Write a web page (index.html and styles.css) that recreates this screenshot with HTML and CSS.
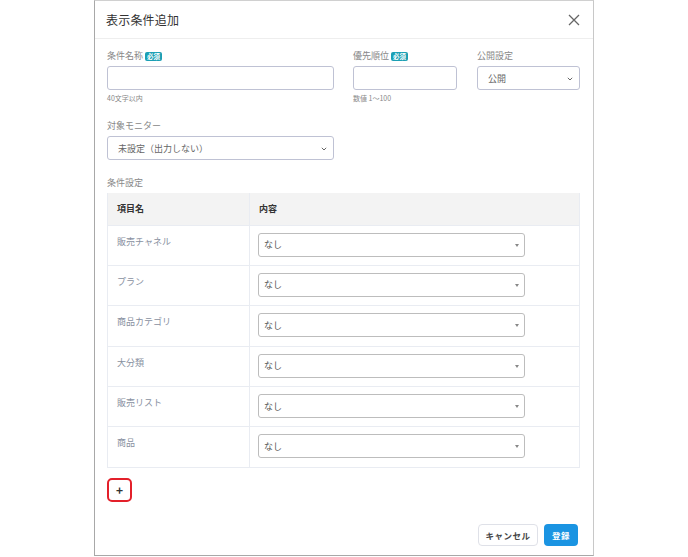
FILE: index.html
```html
<!DOCTYPE html>
<html lang="ja">
<head>
<meta charset="utf-8">
<link rel="stylesheet" href="styles.css">
</head>
<body>
<div class="modal">
  <div class="modal-header">
    <div class="title">表示条件追加</div>
    <svg class="close" width="12" height="12" viewBox="0 0 12 12"><path d="M1 1L11 11M11 1L1 11" stroke="#666" stroke-width="1.3" fill="none"/></svg>
  </div>
  <div class="modal-body">
    <div class="row">
      <div class="field f-name">
        <div class="label">条件名称<span class="badge">必須</span></div>
        <div class="input"></div>
        <div class="help">40文字以内</div>
      </div>
      <div class="field f-prio">
        <div class="label">優先順位<span class="badge">必須</span></div>
        <div class="input"></div>
        <div class="help">数値 1〜100</div>
      </div>
      <div class="field f-pub">
        <div class="label">公開設定</div>
        <div class="input select"><span>公開</span>
          <svg class="chev" width="6" height="4" viewBox="0 0 6 4"><path d="M0.8 0.8L3 3L5.2 0.8" stroke="#666" stroke-width="1" fill="none"/></svg>
        </div>
      </div>
    </div>
    <div class="row row2">
      <div class="field f-name">
        <div class="label">対象モニター</div>
        <div class="input select"><span>未設定（出力しない）</span>
          <svg class="chev" width="6" height="4" viewBox="0 0 6 4"><path d="M0.8 0.8L3 3L5.2 0.8" stroke="#666" stroke-width="1" fill="none"/></svg>
        </div>
      </div>
    </div>
    <div class="label sect">条件設定</div>
    <table class="cond">
      <thead>
        <tr><th class="c1">項目名</th><th>内容</th><th class="c3"></th></tr>
      </thead>
      <tbody>
        <tr><td class="c1">販売チャネル</td><td><div class="tsel">なし<i class="caret"></i></div></td><td class="c3"></td></tr>
        <tr><td class="c1">プラン</td><td><div class="tsel">なし<i class="caret"></i></div></td><td class="c3"></td></tr>
        <tr><td class="c1">商品カテゴリ</td><td><div class="tsel">なし<i class="caret"></i></div></td><td class="c3"></td></tr>
        <tr><td class="c1">大分類</td><td><div class="tsel">なし<i class="caret"></i></div></td><td class="c3"></td></tr>
        <tr><td class="c1">販売リスト</td><td><div class="tsel">なし<i class="caret"></i></div></td><td class="c3"></td></tr>
        <tr><td class="c1">商品</td><td><div class="tsel">なし<i class="caret"></i></div></td><td class="c3"></td></tr>
      </tbody>
    </table>
    <div class="plus">+</div>
  </div>
  <div class="modal-footer">
    <div class="btn cancel">キャンセル</div>
    <div class="btn primary">登録</div>
  </div>
</div>
</body>
</html>
```

FILE: styles.css
```css
* { box-sizing: border-box; }
html, body { margin: 0; padding: 0; background: #fff; }
body {
  font-family: "Noto Sans CJK JP", "Noto Sans", sans-serif;
  color: #333;
}
.modal {
  margin-left: 94px;
  width: 500px;
  height: 556px;
  border: 1px solid #a8a8a8;
  border-top-color: #d0d0d0;
  border-right-color: #c8c8c8;
  background: #fff;
  display: flex;
  flex-direction: column;
}
.modal-header {
  height: 38px;
  border-bottom: 1px solid #eeeeee;
  display: flex;
  align-items: center;
  justify-content: space-between;
  padding: 0 13px 0 11px;
}
.title {
  font-size: 12px;
  color: #333;
  letter-spacing: 0.2px;
}
.close { display: block; }
.modal-body {
  padding: 11px 13px 0 12px;
  flex: 1;
}
.row { display: flex; gap: 19px; }
.row2 { margin-top: 18px; }
.field { display: flex; flex-direction: column; flex-shrink: 0; }
.f-name { width: 227px; }
.f-prio { width: 104px; }
.f-pub { width: 103px; margin-left: 1px; }
.label {
  font-size: 9px;
  line-height: 12px;
  color: #888;
  display: flex;
  align-items: center;
  height: 12px;
}
.badge {
  display: inline-block;
  background: #1b9fb4;
  color: #fff;
  font-size: 6.5px;
  font-weight: bold;
  line-height: 9px;
  padding: 0 2px;
  border-radius: 2px;
  margin-left: 2px;
}
.input {
  margin-top: 4px;
  height: 24px;
  border: 1px solid #bfc2d4;
  border-radius: 3px;
  background: #fff;
}
.select {
  position: relative;
  display: flex;
  align-items: center;
  padding-left: 10px;
  font-size: 9px;
  color: #666;
}
.chev { position: absolute; right: 6px; top: 10px; }
.help {
  margin-top: 4px;
  font-size: 7px;
  line-height: 8px;
  color: #888;
}
.sect { margin-top: 17px; }
.cond {
  margin-top: 4px;
  width: 473px;
  border-collapse: collapse;
  table-layout: fixed;
  font-size: 9px;
}
.cond th {
  background: #f3f3f3;
  height: 32px;
  text-align: left;
  padding: 0 9px;
  font-weight: bold;
  color: #333;
  border-left: 1px solid #e9ecf2;
  border-right: 1px solid #e9ecf2;
}
.cond th.c1 { width: 142px; }
.cond th.c3, .cond td.c3 { width: 55px; border-left: none; }
.cond th:nth-child(2) { border-right: none; }
.cond td {
  height: 40.4px;
  border: 1px solid #e9ecf2;
  padding: 7px 9px 8px 8px;
  vertical-align: top;
}
.cond td:nth-child(2) { border-right: none; }
.cond td.c1 {
  color: #8890a0;
  padding-top: 9px;
  padding-left: 9px;
}
.tsel {
  height: 24px;
  width: 267px;
  border: 1px solid #bdbdbd;
  border-radius: 3px;
  display: flex;
  align-items: center;
  padding-left: 5px;
  color: #555;
  position: relative;
  font-size: 9px;
}
.caret {
  position: absolute;
  right: 5px;
  top: 10px;
  width: 0; height: 0;
  border-left: 2px solid transparent;
  border-right: 2px solid transparent;
  border-top: 3px solid #888;
}
.plus {
  margin-top: 10px;
  width: 25px;
  height: 24px;
  border: 2px solid #e3202a;
  border-radius: 5px;
  display: flex;
  align-items: center;
  justify-content: center;
  font-weight: bold;
  font-size: 12px;
  color: #333;
  line-height: 1;
}
.modal-footer {
  display: flex;
  justify-content: flex-end;
  gap: 6px;
  padding: 0 15px 9px 0;
}
.btn {
  height: 22px;
  border-radius: 4px;
  font-size: 8.5px;
  font-weight: bold;
  display: flex;
  align-items: center;
  justify-content: center;
  letter-spacing: 0.5px;
}
.cancel {
  width: 60px;
  border: 1px solid #dfe1e8;
  color: #444;
  background: #fff;
}
.primary {
  width: 34px;
  background: #1a94e2;
  color: #fff;
}
```
